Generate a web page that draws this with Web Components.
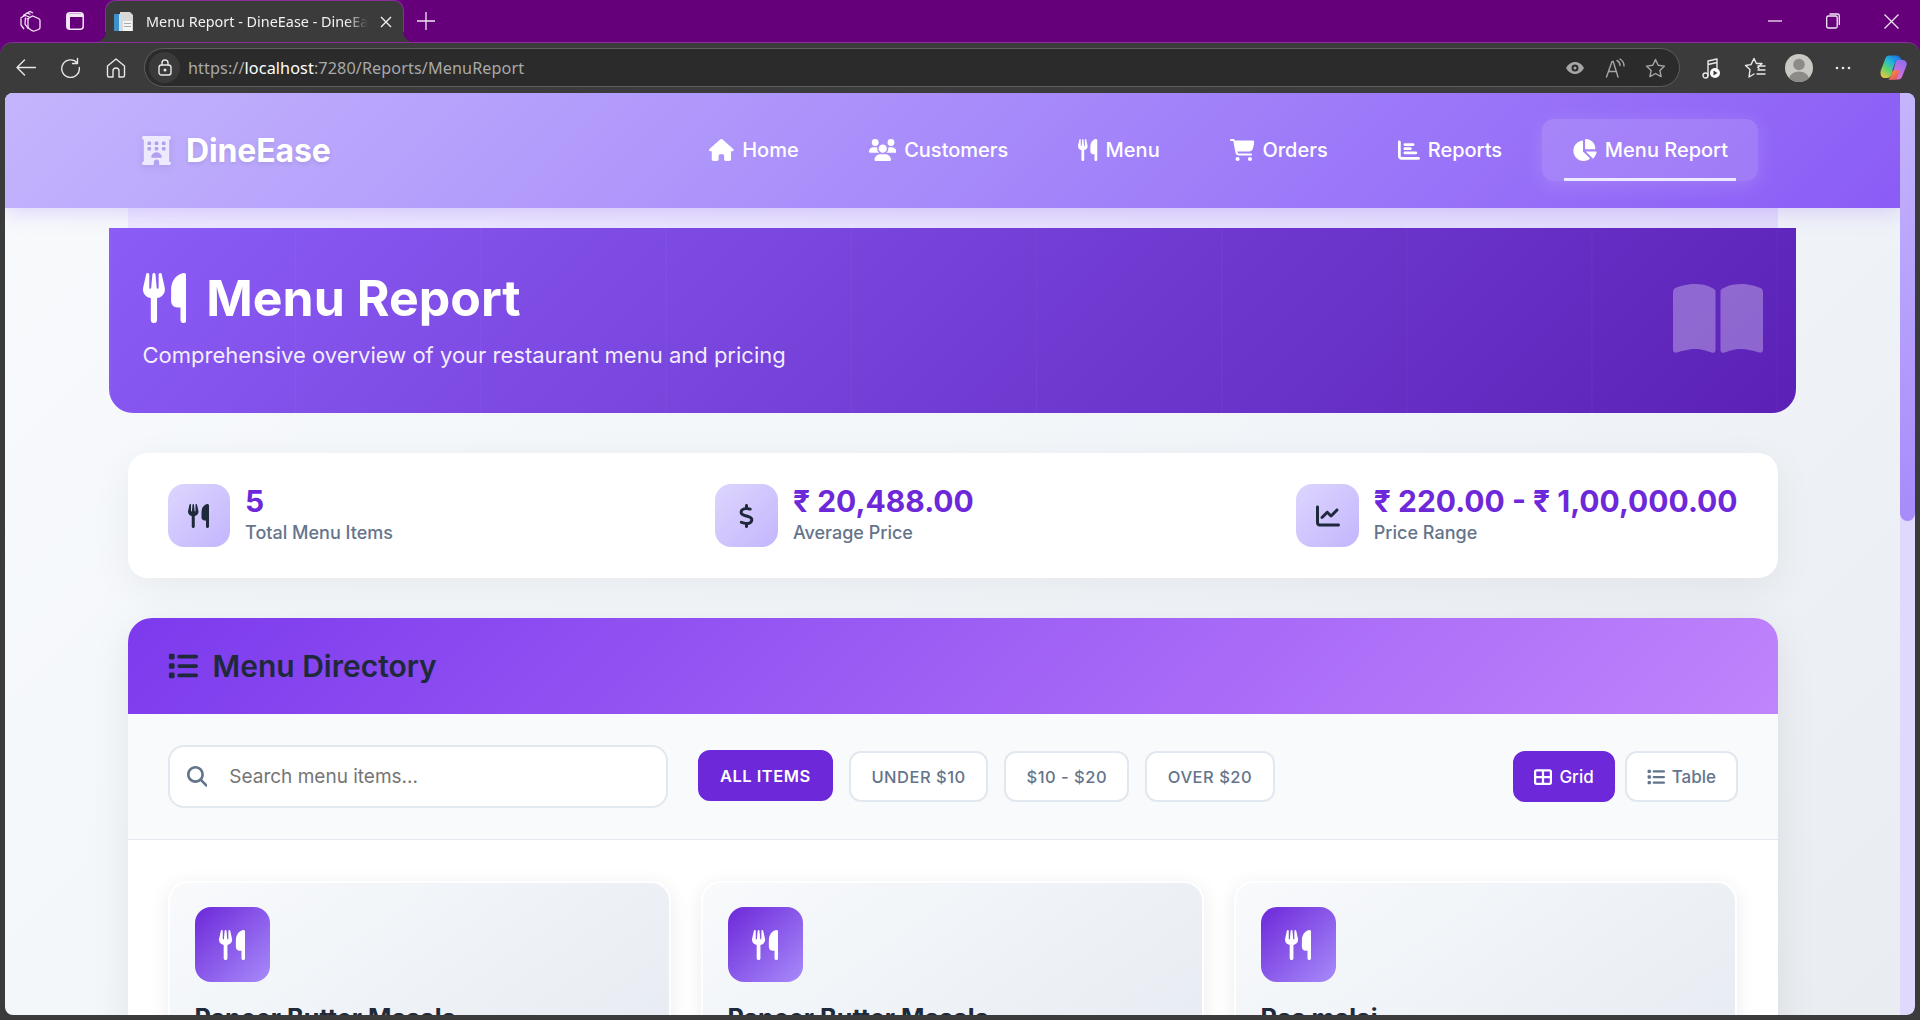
<!DOCTYPE html>
<html lang="en">
<head>
<meta charset="utf-8">
<title>Menu Report - DineEase</title>
<style>
  html, body { margin: 0; height: 1020px; overflow: hidden; background: linear-gradient(#66007a 0 60px, #3b3b3b 60px); }
  body { display: flex; flex-direction: column; font-family: 'Inter', 'Liberation Sans', sans-serif; }
</style>
</head>
<body>
<browser-tabstrip title-text="Menu Report - DineEase - DineEase"></browser-tabstrip>
<browser-toolbar></browser-toolbar>
<browser-viewport>
  <app-header>
    <nav-link icon="house">Home</nav-link>
    <nav-link icon="users">Customers</nav-link>
    <nav-link icon="utensils">Menu</nav-link>
    <nav-link icon="cart">Orders</nav-link>
    <nav-link icon="chartbar">Reports</nav-link>
    <nav-link icon="chartpie" active>Menu Report</nav-link>
  </app-header>
  <page-main>
    <hero-banner heading="Menu Report" sub="Comprehensive overview of your restaurant menu and pricing"></hero-banner>
    <stat-strip>
      <stat-item icon="utensils" value="5" label="Total Menu Items"></stat-item>
      <stat-item icon="dollar" value="₹ 20,488.00" label="Average Price"></stat-item>
      <stat-item icon="chartline" value="₹ 220.00 - ₹ 1,00,000.00" label="Price Range"></stat-item>
    </stat-strip>
    <menu-directory heading="Menu Directory">
      <search-box slot="filters" placeholder="Search menu items..."></search-box>
      <filter-chip slot="filters" active>ALL ITEMS</filter-chip>
      <filter-chip slot="filters">UNDER $10</filter-chip>
      <filter-chip slot="filters">$10 - $20</filter-chip>
      <filter-chip slot="filters">OVER $20</filter-chip>
      <view-toggle slot="filters" icon="grid" active>Grid</view-toggle>
      <view-toggle slot="filters" icon="listul">Table</view-toggle>
      <menu-card name="Paneer Butter Masala"></menu-card>
      <menu-card name="Paneer Butter Masala"></menu-card>
      <menu-card name="Ras malai"></menu-card>
    </menu-directory>
  </page-main>
</browser-viewport>

<script>
const FA = {
  utensils: [448, 'M416 0C400 0 288 32 288 176V288c0 35.3 28.7 64 64 64h32V480c0 17.7 14.3 32 32 32s32-14.3 32-32V352 240 32c0-17.7-14.3-32-32-32zM64 16C64 7.8 57.9 1 49.7 .1S34.2 4.6 32.4 12.5L2.1 148.8C.7 155.1 0 161.5 0 167.9c0 45.9 35.1 83.6 80 87.7V480c0 17.7 14.3 32 32 32s32-14.3 32-32V255.6c44.9-4.1 80-41.8 80-87.7c0-6.4-.7-12.8-2.1-19.1L191.6 12.5c-1.8-8-9.3-13.3-17.4-12.4S160 7.8 160 16V150.2c0 5.4-4.4 9.8-9.8 9.8c-5.1 0-9.3-3.9-9.8-9L127.9 14.6C127.2 6.3 120.3 0 112 0s-15.2 6.3-15.9 14.6L83.7 151c-.5 5.1-4.7 9-9.8 9c-5.4 0-9.8-4.4-9.8-9.8V16zm48.3 152l-.3 0-.3 0 .3-.7 .3 .7z'],
  house: [576, 'M575.8 255.5c0 18-15 32.1-32 32.1h-32l.7 160.2c0 2.7-.2 5.4-.5 8.1V472c0 22.1-17.9 40-40 40H456c-1.1 0-2.2 0-3.3-.1c-1.4 .1-2.8 .1-4.2 .1H416 392c-22.1 0-40-17.9-40-40V448 384c0-17.7-14.3-32-32-32H256c-17.7 0-32 14.3-32 32v64 24c0 22.1-17.9 40-40 40H160 128.1c-1.5 0-3-.1-4.5-.2c-1.2 .1-2.4 .2-3.6 .2H104c-22.1 0-40-17.9-40-40V360c0-.9 0-1.9 .1-2.8V287.6H32c-18 0-32-14-32-32.1c0-9 3-17 10-24L266.4 8c7-7 15-8 22-8s15 2 21 7L564.8 231.5c8 7 12 15 11 24z'],
  users: [640, 'M144 0a80 80 0 1 1 0 160A80 80 0 1 1 144 0zM512 0a80 80 0 1 1 0 160A80 80 0 1 1 512 0zM0 298.7C0 239.8 47.8 192 106.7 192h42.7c15.9 0 31 3.5 44.6 9.7c-1.3 7.2-1.9 14.7-1.9 22.3c0 38.2 16.8 72.5 43.3 96c-.2 0-.4 0-.7 0H21.3C9.6 320 0 310.4 0 298.7zM405.3 320c-.2 0-.4 0-.7 0c26.6-23.5 43.3-57.8 43.3-96c0-7.6-.7-15-1.9-22.3c13.6-6.3 28.7-9.7 44.6-9.7h42.7C592.2 192 640 239.8 640 298.7c0 11.8-9.6 21.3-21.3 21.3H405.3zM224 224a96 96 0 1 1 192 0 96 96 0 1 1 -192 0zM128 485.3C128 411.7 187.7 352 261.3 352H378.7C452.3 352 512 411.7 512 485.3c0 14.7-11.9 26.7-26.7 26.7H154.7c-14.7 0-26.7-11.9-26.7-26.7z'],
  cart: [576, 'M0 24C0 10.7 10.7 0 24 0H69.5c22 0 41.5 12.8 50.6 32h411c26.3 0 45.5 25 38.6 50.4l-41 152.3c-8.5 31.4-37 53.3-69.5 53.3H170.7l5.4 28.5c2.2 11.3 12.1 19.5 23.6 19.5H488c13.3 0 24 10.7 24 24s-10.7 24-24 24H199.7c-34.6 0-64.3-24.6-70.7-58.5L77.4 54.5c-.7-3.8-4-6.5-7.9-6.5H24C10.7 48 0 37.3 0 24zM128 464a48 48 0 1 1 96 0 48 48 0 1 1 -96 0zm336-48a48 48 0 1 1 0 96 48 48 0 1 1 0-96z'],
  chartbar: [512, 'M32 32c17.7 0 32 14.3 32 32V400c0 8.8 7.2 16 16 16H480c17.7 0 32 14.3 32 32s-14.3 32-32 32H80c-44.2 0-80-35.8-80-80V64C0 46.3 14.3 32 32 32zm96 96c0-17.7 14.3-32 32-32l192 0c17.7 0 32 14.3 32 32s-14.3 32-32 32l-192 0c-17.7 0-32-14.3-32-32zm32 64H288c17.7 0 32 14.3 32 32s-14.3 32-32 32H160c-17.7 0-32-14.3-32-32s14.3-32 32-32zm0 96H416c17.7 0 32 14.3 32 32s-14.3 32-32 32H160c-17.7 0-32-14.3-32-32s14.3-32 32-32z'],
  chartpie: [576, 'M304 240V16.6c0-9 7-16.6 16-16.6C443.7 0 544 100.3 544 224c0 9-7.6 16-16.6 16H304zM32 272C32 150.7 122.1 50.3 239 34.3c9.2-1.3 17 6.1 17 15.4V288L412.5 444.5c6.7 6.7 6.2 17.7-1.5 23.1C371.8 495.6 323.8 512 272 512C139.5 512 32 404.6 32 272zm526.4 16c9.3 0 16.6 7.8 15.4 17c-7.7 55.9-34.6 105.6-73.9 142.3c-6 5.6-15.4 5.2-21.2-.7L320 288H558.4z'],
  hotel: [512, 'M0 32C0 14.3 14.3 0 32 0H480c17.7 0 32 14.3 32 32s-14.3 32-32 32V448c17.7 0 32 14.3 32 32s-14.3 32-32 32H304V464c0-26.5-21.5-48-48-48s-48 21.5-48 48v48H32c-17.7 0-32-14.3-32-32s14.3-32 32-32V64C14.3 64 0 49.7 0 32zm96 80v32c0 8.8 7.2 16 16 16h32c8.8 0 16-7.2 16-16V112c0-8.8-7.2-16-16-16H112c-8.8 0-16 7.2-16 16zM240 96c-8.8 0-16 7.2-16 16v32c0 8.8 7.2 16 16 16h32c8.8 0 16-7.2 16-16V112c0-8.8-7.2-16-16-16H240zm112 16v32c0 8.8 7.2 16 16 16h32c8.8 0 16-7.2 16-16V112c0-8.8-7.2-16-16-16H368c-8.8 0-16 7.2-16 16zM112 192c-8.8 0-16 7.2-16 16v32c0 8.8 7.2 16 16 16h32c8.8 0 16-7.2 16-16V208c0-8.8-7.2-16-16-16H112zm112 16v32c0 8.8 7.2 16 16 16h32c8.8 0 16-7.2 16-16V208c0-8.8-7.2-16-16-16H240c-8.8 0-16 7.2-16 16zm144-16c-8.8 0-16 7.2-16 16v32c0 8.8 7.2 16 16 16h32c8.8 0 16-7.2 16-16V208c0-8.8-7.2-16-16-16H368zM328 384c13.3 0 24.3-10.9 21-23.8c-10.6-41.5-48.2-72.2-93-72.2s-82.5 30.7-93 72.2c-3.3 12.8 7.8 23.8 21 23.8H328z'],
  book: [576, 'M249.6 471.5c10.8 3.8 22.4-4.1 22.4-15.5V78.6c0-4.2-1.6-8.4-5-11C247.4 52 202.4 32 144 32C93.5 32 46.3 45.3 18.1 56.1C6.8 60.5 0 71.7 0 83.8V454.1c0 11.9 12.8 20.2 24.1 16.5C55.6 460.1 105.5 448 144 448c33.9 0 79 14 105.6 23.5zm76.8 0C353 462 398.1 448 432 448c38.5 0 88.4 12.1 119.9 22.6c11.3 3.8 24.1-4.6 24.1-16.5V83.8c0-12.1-6.8-23.3-18.1-27.6C529.7 45.3 482.5 32 432 32c-58.4 0-103.4 20-123 35.6c-3.3 2.6-5 6.8-5 11V456c0 11.4 11.7 19.3 22.4 15.5z'],
  dollar: [320, 'M160 0c17.7 0 32 14.3 32 32V67.7c1.6 .2 3.1 .4 4.7 .7c.4 .1 .7 .1 1.1 .2l48 8.8c17.4 3.2 28.9 19.9 25.7 37.2s-19.9 28.9-37.2 25.7l-47.5-8.7c-31.3-4.6-58.9-1.5-78.3 6.2s-27.2 18.3-29 28.1c-2 10.7-.5 16.7 1.2 20.4c1.8 3.9 5.5 8.3 12.8 13.2c16.3 10.7 41.3 17.7 73.7 26.3l2.9 .8c28.6 7.6 63.6 16.8 89.6 33.8c14.2 9.3 27.6 21.9 35.9 39.5c8.5 17.9 10.3 37.9 6.4 59.2c-6.9 38-33.1 63.4-65.6 76.7c-13.7 5.6-28.6 9.2-44.4 11V480c0 17.7-14.3 32-32 32s-32-14.3-32-32V445.1c-.4-.1-.9-.1-1.3-.2l-.2 0 0 0c-24.4-3.8-64.5-14.3-91.5-26.3c-16.1-7.2-23.4-26.1-16.2-42.2s26.1-23.4 42.2-16.2c20.9 9.3 55.3 18.5 75.2 21.6c31.9 4.7 58.2 2 76-5.3c16.9-6.9 24.6-16.9 26.8-28.9c1.9-10.6 .4-16.7-1.3-20.4c-1.9-4-5.6-8.4-13-13.3c-16.4-10.7-41.5-17.7-74-26.3l-2.8-.7 0 0C119.4 279.3 84.4 270 58.4 253c-14.2-9.3-27.5-22-35.8-39.6c-8.4-17.9-10.1-37.9-6.1-59.2C23.7 116 52.3 91.2 84.8 78.3c13.3-5.3 27.9-8.9 43.2-11V32c0-17.7 14.3-32 32-32z'],
  chartline: [512, 'M64 64c0-17.7-14.3-32-32-32S0 46.3 0 64V400c0 44.2 35.8 80 80 80H480c17.7 0 32-14.3 32-32s-14.3-32-32-32H80c-8.8 0-16-7.2-16-16V64zm406.6 86.6c12.5-12.5 12.5-32.8 0-45.3s-32.8-12.5-45.3 0L320 210.7l-57.4-57.4c-12.5-12.5-32.8-12.5-45.3 0l-112 112c-12.5 12.5-12.5 32.8 0 45.3s32.8 12.5 45.3 0L240 221.3l57.4 57.4c12.5 12.5 32.8 12.5 45.3 0l128-128z'],
  listul: [512, 'M40 48C26.7 48 16 58.7 16 72v48c0 13.3 10.7 24 24 24H88c13.3 0 24-10.7 24-24V72c0-13.3-10.7-24-24-24H40zM192 64c-17.7 0-32 14.3-32 32s14.3 32 32 32H480c17.7 0 32-14.3 32-32s-14.3-32-32-32H192zm0 160c-17.7 0-32 14.3-32 32s14.3 32 32 32H480c17.7 0 32-14.3 32-32s-14.3-32-32-32H192zm0 160c-17.7 0-32 14.3-32 32s14.3 32 32 32H480c17.7 0 32-14.3 32-32s-14.3-32-32-32H192zM16 232v48c0 13.3 10.7 24 24 24H88c13.3 0 24-10.7 24-24V232c0-13.3-10.7-24-24-24H40c-13.3 0-24 10.7-24 24zM40 368c-13.3 0-24 10.7-24 24v48c0 13.3 10.7 24 24 24H88c13.3 0 24-10.7 24-24V392c0-13.3-10.7-24-24-24H40z'],
  search: [512, 'M416 208c0 45.9-14.9 88.3-40 122.7L502.6 457.4c12.5 12.5 12.5 32.8 0 45.3s-32.8 12.5-45.3 0L330.7 376c-34.4 25.2-76.8 40-122.7 40C93.1 416 0 322.9 0 208S93.1 0 208 0S416 93.1 416 208zM208 352a144 144 0 1 0 0-288 144 144 0 1 0 0 288z'],
  grid: [512, 'M448 96V224H288V96H448zm0 192V416H288V288H448zM224 224H64V96H224V224zM64 288H224V416H64V288zM64 32C28.7 32 0 60.7 0 96V416c0 35.3 28.7 64 64 64H448c35.3 0 64-28.7 64-64V96c0-35.3-28.7-64-64-64H64z']
};

// font-awesome style glyph, sized by font-size like the original <i> tags
class FaIcon extends HTMLElement {
  connectedCallback() {
    const root = this.attachShadow({ mode: 'open' });
    const [w, d] = FA[this.getAttribute('name')];
    root.innerHTML = `<style>:host{display:inline-flex;line-height:0;flex:none}svg{height:1em;width:auto;fill:currentColor;display:block}</style><svg viewBox="0 0 ${w} 512"><path d="${d}"/></svg>`;
  }
}
customElements.define('fa-icon', FaIcon);

class BrowserTabstrip extends HTMLElement {
  connectedCallback() {
    const root = this.attachShadow({ mode: 'open' });
    root.innerHTML = `
<style>
  :host { display: flex; align-items: flex-end; height: 42px; background: #66007a; padding-left: 18px; flex: none; color: #fff; font-family: 'Noto Sans', 'Open Sans', sans-serif; }
  .btn { width: 24px; height: 42px; display: flex; align-items: center; justify-content: center; }
  .btn + .btn { margin-left: 21px; margin-right: 18px; }
  svg { display: block; fill: none; stroke: #f3e6f5; stroke-width: 1.3; }
  .tab { position: relative; width: 299px; height: 42px; background: #3b3b3b; border-radius: 10px 10px 0 0; border: 1px solid #8a2e9c; border-bottom: 0; box-sizing: border-box; display: flex; align-items: center; padding: 0 11px 0 8px; gap: 12px; }
  .tab::before, .tab::after { content: ''; position: absolute; bottom: 0; width: 10px; height: 10px; }
  .tab::before { left: -10px; background: radial-gradient(circle at 0 0, #66007a 9.5px, #3b3b3b 10px); }
  .tab::after { right: -10px; background: radial-gradient(circle at 100% 0, #66007a 9.5px, #3b3b3b 10px); }
  .title { flex: 1; font-size: 14.4px; white-space: nowrap; overflow: hidden; color: #f2f2f2; -webkit-mask-image: linear-gradient(90deg, #000 90%, transparent); mask-image: linear-gradient(90deg, #000 90%, transparent); }
  .plus { margin-left: 13px; height: 42px; display: flex; align-items: center; }
  .spacer { flex: 1; }
  .win { width: 58px; height: 42px; display: flex; align-items: center; justify-content: center; }
  .wins { display: flex; }
</style>
<div class="btn"><svg width="22" height="22" viewBox="0 0 22 22"><path d="M7 3.500 11 1.500l3 1.500M4 5.500 8.500 3l3 1.500M1.500 8 6 5.500 10.500 7M2 8.500v6.500l3 4M6.500 7.500l-.5 6.500 3.500 5"/><path d="M9 8.500l4.500-2.500 6 2.500c1 .5 1.500 1 1.500 2v7c0 1-.5 1.500-1.500 2l-4 1.500c-1 .3-1.500.2-2.500-.3l-3-2.200c-.7-.6-1-1-1-2V10c0-.7 0-1 .5-1.500z"/></svg></div>
<div class="btn"><svg width="18" height="18" viewBox="0 0 18 18" style="stroke-width:1.500"><rect x=".8" y=".8" width="16.400" height="16.400" rx="3"/><path d="M1 1.500h16v3.500H4v12H1z" fill="#f3e6f5" stroke="none"/></svg></div>
<div class="tab">
  <svg width="20" height="20" viewBox="0 0 20 20" style="stroke:none;flex:none"><path d="M6 0h10l3 3v16H6z" fill="#d8d8d8"/><rect x="0" y="2" width="7" height="17" fill="#3f8fcc"/><rect x="5" y="2" width="2" height="17" fill="#bfe0f5"/><path d="M9 9h9v10H9z" fill="#f4f4f4"/><rect x="10" y="11" width="7" height="1" fill="#aaa"/><rect x="10" y="14" width="7" height="1" fill="#aaa"/></svg>
  <span class="title">${this.getAttribute('title-text')}</span>
  <svg width="12" height="12" viewBox="0 0 12 12" style="flex:none;stroke:#f2f2f2;stroke-width:1.400"><path d="M1 1l10 10M11 1 1 11"/></svg>
</div>
<div class="plus"><svg width="18" height="18" viewBox="0 0 18 18"><path d="M9 0v18M0 9h18"/></svg></div>
<div class="spacer"></div>
<div class="wins">
  <div class="win"><svg width="14" height="2" viewBox="0 0 14 2"><path d="M0 1h14"/></svg></div>
  <div class="win"><svg width="14" height="16" viewBox="0 0 14 16"><rect x=".7" y="3" width="10.500" height="12" rx="1.500"/><path d="M3.500 1h8a1.800 1.800 0 0 1 1.800 1.800V12"/></svg></div>
  <div class="win"><svg width="15" height="15" viewBox="0 0 15 15"><path d="M.5.500l14 14M14.500.500l-14 14"/></svg></div>
</div>`;
  }
}
customElements.define('browser-tabstrip', BrowserTabstrip);

class BrowserToolbar extends HTMLElement {
  connectedCallback() {
    const root = this.attachShadow({ mode: 'open' });
    root.innerHTML = `
<style>
  :host { display: flex; align-items: center; height: 51px; flex: none; background: #3b3b3b; box-sizing: border-box; padding: 0 0 1px 3px; font-family: 'Noto Sans', 'Open Sans', sans-serif; border-top: 1px solid #8a2e9c; border-radius: 12px 12px 0 0; }
  .nav { width: 45px; display: flex; justify-content: center; flex: none; }
  svg { display: block; fill: none; stroke: #e8e8e8; stroke-width: 1.400; stroke-linecap: round; stroke-linejoin: round; }
  .bar { width: 1536px; height: 39px; margin-left: 6px; box-sizing: border-box; border: 1px solid #5e5e5e; border-radius: 20px; background: #2b2b2b; display: flex; align-items: center; padding: 0 4px 0 4px; flex: none; }
  .lock { width: 31px; height: 31px; border-radius: 50%; background: #3a3a3a; display: flex; align-items: center; justify-content: center; flex: none; }
  .url { margin-left: 8px; flex: 1; font-size: 16.2px; color: #a9a9a9; letter-spacing: .1px; white-space: nowrap; }
  .url b { font-weight: 400; color: #fff; }
  .in { display: flex; align-items: center; width: 40px; justify-content: center; flex: none; }
  .in svg { stroke: #a6a6a6; }
  .tools { display: flex; align-items: center; margin-left: 9px; flex: 1; }
  .t { width: 44px; display: flex; align-items: center; justify-content: center; flex: none; }
  .avatar { width: 28px; height: 28px; border-radius: 50%; background: #c9c8c3; overflow: hidden; }
</style>
<div class="nav"><svg width="20" height="17" viewBox="0 0 20 17"><path d="M19.500 8.500H1M8.500 1 1 8.500 8.500 16"/></svg></div>
<div class="nav"><svg width="21" height="21" viewBox="0 0 21 21"><path d="M17.500 1.500v5h-5M17.300 6a8.800 8.800 0 1 0 2 4.500"/></svg></div>
<div class="nav"><svg width="20" height="20" viewBox="0 0 20 20"><path d="M10 1 1.500 8v9.500A1.500 1.500 0 0 0 3 19h4v-6a3 3 0 0 1 6 0v6h4a1.500 1.500 0 0 0 1.500-1.500V8z"/></svg></div>
<div class="bar">
  <div class="lock"><svg width="14" height="17" viewBox="0 0 14 17"><rect x="1" y="6" width="12" height="10" rx="2.500"/><path d="M4 6V4a3 3 0 0 1 6 0v2"/><circle cx="7" cy="11" r=".8" fill="#e8e8e8"/></svg></div>
  <div class="url">https://<b>localhost</b>:7280/Reports/MenuReport</div>
  <div class="in"><svg width="18" height="14" viewBox="0 0 18 14" style="stroke:none"><path fill="#a6a6a6" fill-rule="evenodd" d="M9 1c4 0 7 2.500 9 6-2 3.500-5 6-9 6s-7-2.500-9-6c2-3.500 5-6 9-6zm0 2.500a3.500 3.500 0 1 0 0 7 3.500 3.500 0 0 0 0-7zM9 5.500a1.500 1.500 0 1 1 0 3 1.500 1.500 0 0 1 0-3z"/></svg></div>
  <div class="in"><svg width="20" height="20" viewBox="0 0 20 20"><path d="M1.500 19 7 3.500h1.200L13 19M3.500 13.500h8M12 2.500c2 1 3 2.500 3 5M15 1c2.500 1.500 4 4 4 7"/></svg></div>
  <div class="in"><svg width="21" height="20" viewBox="0 0 21 20"><path d="M10.500 1.500l2.700 5.800 6.300.8-4.600 4.300 1.200 6.200-5.600-3.100-5.600 3.100 1.200-6.200-4.600-4.300 6.300-.8z"/></svg></div>
</div>
<div class="tools">
  <div class="t"><svg width="19" height="24" viewBox="0 0 19 24"><circle cx="3.500" cy="19.500" r="2.500"/><path d="M6 19.500V5L15 3v9M6 8.500l9-2"/><circle cx="13" cy="17" r="5" fill="#fff" stroke="none"/><path d="M11.500 14.500l4 2.500-4 2.500z" fill="#3b3b3b" stroke="none"/></svg></div>
  <div class="t"><svg width="22" height="22" viewBox="0 0 22 22"><path d="M10 1.500l2.400 5h5.600l-4.200 4 1.200 1M6 12.500 1.500 8.500l5.500-.9L10 1.500M6 12.500l-1 7.500 5-3"/><path d="M14 9h7M14 13h7M13 17h8"/></svg></div>
  <div class="t"><div class="avatar"><svg width="28" height="28" viewBox="0 0 28 28" style="stroke:none"><circle cx="14" cy="10.500" r="5.800" fill="#8c8b87"/><ellipse cx="14" cy="25" rx="10" ry="7.500" fill="#8c8b87"/></svg></div></div>
  <div class="t"><svg width="16" height="4" viewBox="0 0 16 4" style="stroke:none;fill:#e8e8e8"><circle cx="2" cy="2" r="1.300"/><circle cx="8" cy="2" r="1.300"/><circle cx="14" cy="2" r="1.300"/></svg></div>
  <div class="t" style="margin-left:6px"><svg width="27" height="25" viewBox="0 0 27 25" style="stroke:none">
    <defs>
      <linearGradient id="c1" x1="0.800" y1="0" x2="0.100" y2="1"><stop offset="0" stop-color="#1f6fe8"/><stop offset=".35" stop-color="#22b8d8"/><stop offset=".65" stop-color="#62d26a"/><stop offset="1" stop-color="#f7c53c"/></linearGradient>
      <linearGradient id="c2" x1="0.800" y1="0" x2="0.200" y2="1"><stop offset="0" stop-color="#8f6cf0"/><stop offset=".6" stop-color="#c36fe0"/><stop offset="1" stop-color="#f07cb4"/></linearGradient>
      <linearGradient id="c3" x1="0" y1="0" x2="1" y2="1"><stop offset="0" stop-color="#f4a13a"/><stop offset="1" stop-color="#e8455f"/></linearGradient>
    </defs>
    <path fill="url(#c2)" d="M17 5H22.500C25.500 5 27.500 7.500 26.500 10.500L22.200 21.500C21.500 23.200 20 24.500 18 24.500H9.500C11 23 12 21 12.500 19.500L15 9C15.500 7 16 5.500 17 5Z"/>
    <path fill="url(#c3)" d="M10.800 20.500C10.200 22.500 9 24.500 7.500 24.500H15C16.500 24.500 17 23.500 17.500 22L19.500 15.500H14C12.500 15.500 12 16.500 11.500 18Z"/>
    <path fill="url(#c1)" d="M9.500 .5C7.500 .5 6 1.800 5.400 3.500L1 15C-.5 19.500 1.500 23 5 23H7.500C9 23 10.300 22 10.800 20.500L15 7.500C15.700 5.500 17 5 18.500 5H22L20 2.500C19 1.200 18 .5 16.500 .5Z"/>
  </svg></div>
</div>`;
  }
}
customElements.define('browser-toolbar', BrowserToolbar);

// the web content area: page plus its styled scrollbar
class BrowserViewport extends HTMLElement {
  connectedCallback() {
    const root = this.attachShadow({ mode: 'open' });
    root.innerHTML = `
<style>
  :host { display: flex; flex: none; height: 922px; margin: 0 5px 5px 5px; border-radius: 8px; overflow: hidden; }
  .page { flex: 1; min-width: 0; overflow: hidden; background: linear-gradient(135deg, #f8fafc 0%, #f1f5f9 60%, #e9edf2 100%); }
  .track { width: 15px; flex: none; background: #e0d9fd; display: flex; border-radius: 0 8px 8px 0; }
  .thumb { width: 15px; height: 428px; border-radius: 0 0 8px 8px; background: linear-gradient(180deg, #c4b5fd 0%, #a78bfa 100%); }
</style>
<div class="page"><slot></slot></div>
<div class="track"><div class="thumb"></div></div>`;
  }
}
customElements.define('browser-viewport', BrowserViewport);

class AppHeader extends HTMLElement {
  connectedCallback() {
    const root = this.attachShadow({ mode: 'open' });
    root.innerHTML = `
<style>
  :host { display: flex; align-items: center; justify-content: space-between; height: 115px; box-sizing: border-box; padding: 0 142px 1px 137px; background: linear-gradient(135deg, #c4b5fd 0%, #a78bfa 50%, #8b5cf6 100%); box-shadow: 0 4px 20px rgba(139,92,246,.25); position: relative; }
  .logo { display: flex; align-items: center; gap: 15px; font-size: 32px; font-weight: 700; color: #fff; text-shadow: 0 2px 4px rgba(0,0,0,.1); letter-spacing: -.15px; }
  .logo fa-icon { font-size: 29px; color: #ede9fe; filter: drop-shadow(0 2px 4px rgba(0,0,0,.1)); }
  nav { display: flex; align-items: center; gap: 10px; }
</style>
<div class="logo"><fa-icon name="hotel"></fa-icon><span>DineEase</span></div>
<nav><slot></slot></nav>`;
  }
}
customElements.define('app-header', AppHeader);

class NavLink extends HTMLElement {
  connectedCallback() {
    const root = this.attachShadow({ mode: 'open' });
    root.innerHTML = `
<style>
  :host { display: flex; position: relative; align-items: center; gap: 8px; height: 62px; padding: 0 30px; color: #fff; font-size: 20px; font-weight: 500; border-radius: 12px; box-sizing: border-box; white-space: nowrap; }
  :host([active]) { background: rgba(255,255,255,.15); box-shadow: 0 4px 20px rgba(255,255,255,.15); }
  :host([active])::after { content: ''; position: absolute; left: 22px; right: 22px; bottom: 0; height: 3px; background: #ede9fe; }
  fa-icon { font-size: 22px; }
</style>
<fa-icon name="${this.getAttribute('icon')}"></fa-icon><slot></slot>`;
  }
}
customElements.define('nav-link', NavLink);

class PageMain extends HTMLElement {
  connectedCallback() {
    const root = this.attachShadow({ mode: 'open' });
    root.innerHTML = `
<style>
  :host { display: block; width: 1650px; margin: 0 auto; }
  .strip { height: 20px; background: linear-gradient(90deg, #ede9fe, #e3ddfb); }
</style>
<div class="strip"></div>
<slot></slot>`;
  }
}
customElements.define('page-main', PageMain);

class HeroBanner extends HTMLElement {
  connectedCallback() {
    const root = this.attachShadow({ mode: 'open' });
    root.innerHTML = `
<style>
  :host { display: block; position: relative; margin: 0 -18px 40px -19px; height: 185px; box-sizing: border-box; padding: 41px 33px 0 34px; border-radius: 0 0 24px 24px; color: #fff;
    background: linear-gradient(90deg, rgba(255,255,255,.035) 1px, transparent 1px) 1px 0 / 185.2px 100%, linear-gradient(135deg, #8b5cf6 0%, #5b21b6 100%); }
  h1 { margin: 0; display: flex; align-items: center; gap: 20px; font-size: 50px; line-height: 58px; font-weight: 700; }
  p { margin: 14px 0 0; font-size: 22px; line-height: 28px; color: rgba(255,255,255,.92); }
  .book { position: absolute; right: 33px; top: 51px; font-size: 80px; color: rgba(255,255,255,.3); }
</style>
<h1><fa-icon name="utensils"></fa-icon><span>${this.getAttribute('heading')}</span></h1>
<p>${this.getAttribute('sub')}</p>
<fa-icon class="book" name="book"></fa-icon>`;
  }
}
customElements.define('hero-banner', HeroBanner);

class StatStrip extends HTMLElement {
  connectedCallback() {
    const root = this.attachShadow({ mode: 'open' });
    root.innerHTML = `
<style>
  :host { display: flex; justify-content: space-between; align-items: center; height: 125px; box-sizing: border-box; padding: 0 40px; background: #fff; border-radius: 20px; box-shadow: 0 10px 40px rgba(0,0,0,.06); margin-bottom: 40px; }
</style>
<slot></slot>`;
  }
}
customElements.define('stat-strip', StatStrip);

class StatItem extends HTMLElement {
  connectedCallback() {
    const root = this.attachShadow({ mode: 'open' });
    root.innerHTML = `
<style>
  :host { display: flex; align-items: center; gap: 15px; }
  .ic { width: 62.600px; height: 63px; border-radius: 16px; display: flex; align-items: center; justify-content: center; background: linear-gradient(135deg, #ddd6fe, #c4b5fd); color: #1e293b; font-size: 24px; }
  .txt { margin-top: -4px; }
  .v { font-size: 30px; line-height: 36px; font-weight: 700; color: #6d28d9; white-space: nowrap; }
  .l { margin-top: 2px; font-size: 18px; line-height: 24px; color: #64748b; font-weight: 500; }
</style>
<div class="ic"><fa-icon name="${this.getAttribute('icon')}"></fa-icon></div>
<div class="txt"><div class="v">${this.getAttribute('value')}</div><div class="l">${this.getAttribute('label')}</div></div>`;
  }
}
customElements.define('stat-item', StatItem);

class MenuDirectory extends HTMLElement {
  connectedCallback() {
    const root = this.attachShadow({ mode: 'open' });
    root.innerHTML = `
<style>
  :host { display: block; background: #fff; border-radius: 24px 24px 0 0; box-shadow: 0 10px 40px rgba(0,0,0,.08); }
  header { height: 96px; box-sizing: border-box; padding: 0 40px; display: flex; align-items: center; gap: 15px; border-radius: 24px 24px 0 0; background: linear-gradient(135deg, #7c3aed 0%, #c084fc 100%); color: #1e293b; font-size: 30px; font-weight: 600; }
  .filters { height: 126px; box-sizing: border-box; padding: 0 40px; background: #f8fafc; border-bottom: 1px solid #e2e8f0; display: flex; align-items: center; gap: 16px; }
  .filters ::slotted(search-box) { margin-right: 14px; }
  .filters ::slotted(view-toggle[active]) { margin-left: auto; margin-right: -6px; }
  .grid { display: grid; grid-template-columns: repeat(3, 503px); gap: 30px; padding: 41px 40px 40px; }
</style>
<header><fa-icon name="listul"></fa-icon><span>${this.getAttribute('heading')}</span></header>
<div class="filters"><slot name="filters"></slot></div>
<div class="grid"><slot></slot></div>`;
  }
}
customElements.define('menu-directory', MenuDirectory);

class SearchBox extends HTMLElement {
  connectedCallback() {
    const root = this.attachShadow({ mode: 'open' });
    root.innerHTML = `
<style>
  :host { display: flex; align-items: center; width: 500px; height: 63px; box-sizing: border-box; padding: 0 0 0 17px; gap: 22px; background: #fff; border: 2px solid #e2e8f0; border-radius: 16px; }
  fa-icon { font-size: 20.800px; color: #64748b; }
  span { font-size: 19px; color: #757575; }
</style>
<fa-icon name="search"></fa-icon><span>${this.getAttribute('placeholder')}</span>`;
  }
}
customElements.define('search-box', SearchBox);

class FilterChip extends HTMLElement {
  connectedCallback() {
    const root = this.attachShadow({ mode: 'open' });
    root.innerHTML = `
<style>
  :host { display: flex; align-items: center; height: 51px; box-sizing: border-box; padding: 0 20.400px; border: 2px solid #e2e8f0; border-radius: 12px; background: #fff; color: #64748b; font-size: 16.500px; font-weight: 500; letter-spacing: .5px; white-space: nowrap; }
  :host([active]) { background: #6d28d9; border-color: #6d28d9; color: #fff; font-weight: 600; transform: translateY(-1px); }
</style>
<slot></slot>`;
  }
}
customElements.define('filter-chip', FilterChip);

class ViewToggle extends HTMLElement {
  connectedCallback() {
    const root = this.attachShadow({ mode: 'open' });
    root.innerHTML = `
<style>
  :host { display: flex; align-items: center; gap: 7px; height: 51px; box-sizing: border-box; padding: 0 19.500px; border: 2px solid #e2e8f0; border-radius: 12px; background: #fff; color: #64748b; font-size: 17px; font-weight: 500; white-space: nowrap; }
  :host([active]) { background: #6d28d9; border-color: #6d28d9; color: #fff; }
  fa-icon { font-size: 18px; }
</style>
<fa-icon name="${this.getAttribute('icon')}"></fa-icon><slot></slot>`;
  }
}
customElements.define('view-toggle', ViewToggle);

class MenuCard extends HTMLElement {
  connectedCallback() {
    const root = this.attachShadow({ mode: 'open' });
    root.innerHTML = `
<style>
  :host { display: block; box-sizing: border-box; height: 300px; padding: 24px 25px; border: 2px solid rgba(255,255,255,.95); border-radius: 20px; background: linear-gradient(145deg, #f8fafc, #e2e8f0); box-shadow: 0 4px 20px rgba(0,0,0,.08); }
  .ic { width: 75px; height: 75px; border-radius: 16px; display: flex; align-items: center; justify-content: center; background: linear-gradient(135deg, #6d28d9, #a78bfa); color: #fff; font-size: 30px; }
  h3 { margin: 20px 0 0; font-size: 25.200px; line-height: 32px; font-weight: 700; color: #1e293b; }
</style>
<div class="ic"><fa-icon name="utensils"></fa-icon></div>
<h3>${this.getAttribute('name')}</h3>`;
  }
}
customElements.define('menu-card', MenuCard);
</script>
</body>
</html>
